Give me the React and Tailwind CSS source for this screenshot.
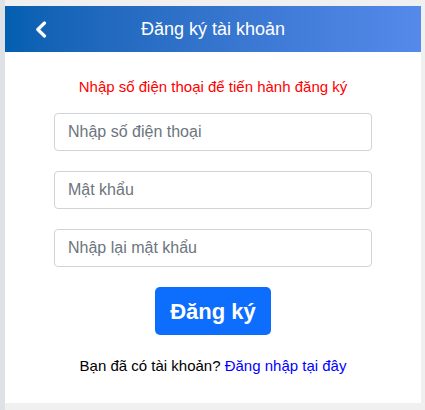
export default function App() {
  return (
    <div className="flex h-[410px] w-[425px] bg-[#f0f0f0] font-['Liberation_Sans',Arial,sans-serif]">
      {/* left edge strip */}
      <div className="w-[5px] shrink-0 bg-[#dee2e6]" />

      <div className="flex flex-col pt-[6px]">
        <div className="w-[416px] h-[397px] bg-white flex flex-col">
          {/* Header */}
          <div className="relative h-[46px] flex items-center justify-center bg-gradient-to-r from-[#035fb0] to-[#558aeb]">
            <button className="absolute left-[29px] top-[14px] w-[14px] h-[18px] flex items-center justify-center">
              <svg width="12" height="17" viewBox="0 0 12 17" fill="none">
                <path d="M9.5 2L2.8 8.5l6.7 6.5" stroke="white" strokeWidth="3.2" strokeLinecap="round" strokeLinejoin="round" />
              </svg>
            </button>
            <h1 className="text-white text-[18px] leading-none">Đăng ký tài khoản</h1>
          </div>

          {/* Form */}
          <div className="flex flex-col items-center">
            <p className="mt-[26px] text-[15px] leading-[18px] text-[#ff0000]">
              Nhập số điện thoại để tiến hành đăng ký
            </p>

            <div className="mt-[17px] flex flex-col gap-[20px]">
              {['Nhập số điện thoại', 'Mật khẩu', 'Nhập lại mật khẩu'].map((ph, i) => (
                <input
                  key={ph}
                  type={i === 0 ? 'text' : 'password'}
                  placeholder={ph}
                  className="w-[318px] h-[38px] px-[13px] text-[16px] border border-[#ced4da] rounded-[4px] outline-none placeholder:text-[#6c757d] text-[#212529]"
                />
              ))}
            </div>

            <button className="mt-[20px] w-[116px] h-[48px] rounded-[5px] bg-[#0d6efd] text-white text-[22px] font-bold">
              Đăng ký
            </button>

            <p className="mt-[22px] text-[15px] leading-[18px] text-black">
              Bạn đã có tài khoản? <a href="#" className="text-[#0000ff]">Đăng nhập tại đây</a>
            </p>
          </div>
        </div>
      </div>
    </div>
  );
}
